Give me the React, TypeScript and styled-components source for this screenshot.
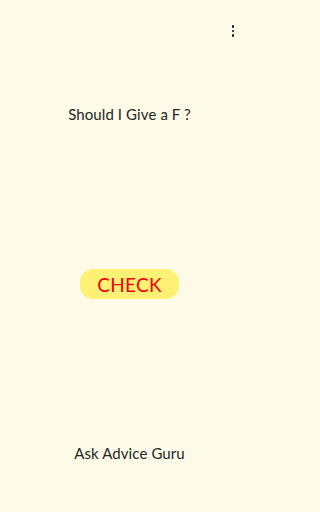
import React from "react";
import styled, { createGlobalStyle } from "styled-components";

const GlobalStyle = createGlobalStyle`
  html, body {
    margin: 0;
    padding: 0;
    background: #fdfbe7;
  }
  * {
    box-sizing: border-box;
  }
`;

const Page = styled.div`
  display: flex;
  flex-direction: column;
  align-items: center;
  width: 259px;
  height: 512px;
  background: #fdfbe7;
  font-family: Lato, "Noto Sans", sans-serif;
  color: #222;
`;

const Toolbar = styled.div`
  align-self: stretch;
  display: flex;
  justify-content: flex-end;
  align-items: center;
  height: 62px;
  padding-right: 22px;
`;

const MenuButton = styled.button`
  display: flex;
  flex-direction: column;
  align-items: center;
  gap: 2px;
  padding: 4px 3px;
  border: none;
  background: transparent;
  cursor: pointer;
`;

const Dot = styled.span`
  width: 2.5px;
  height: 2.5px;
  border-radius: 50%;
  background: #111;
`;

const Label = styled.div<{ $gap: number }>`
  margin-top: ${(p) => p.$gap}px;
  font-size: 15px;
  line-height: 20px;
  color: #262626;
  letter-spacing: 0.1px;
`;

const CheckButton = styled.button`
  margin-top: 145px;
  width: 99px;
  height: 30px;
  border: none;
  border-radius: 13px;
  background: #fff176;
  color: #f20000;
  font-family: Lato, "Noto Sans", sans-serif;
  font-size: 19px;
  letter-spacing: 0.3px;
  cursor: pointer;
`;

const App = () => {
  return (
    <>
      <GlobalStyle />
      <Page>
        <Toolbar>
          <MenuButton aria-label="menu">
            <Dot />
            <Dot />
            <Dot />
          </MenuButton>
        </Toolbar>
        <Label $gap={42}>Should I Give a F ?</Label>
        <CheckButton>CHECK</CheckButton>
        <Label $gap={144}>Ask Advice Guru</Label>
      </Page>
    </>
  );
};

export default App;
